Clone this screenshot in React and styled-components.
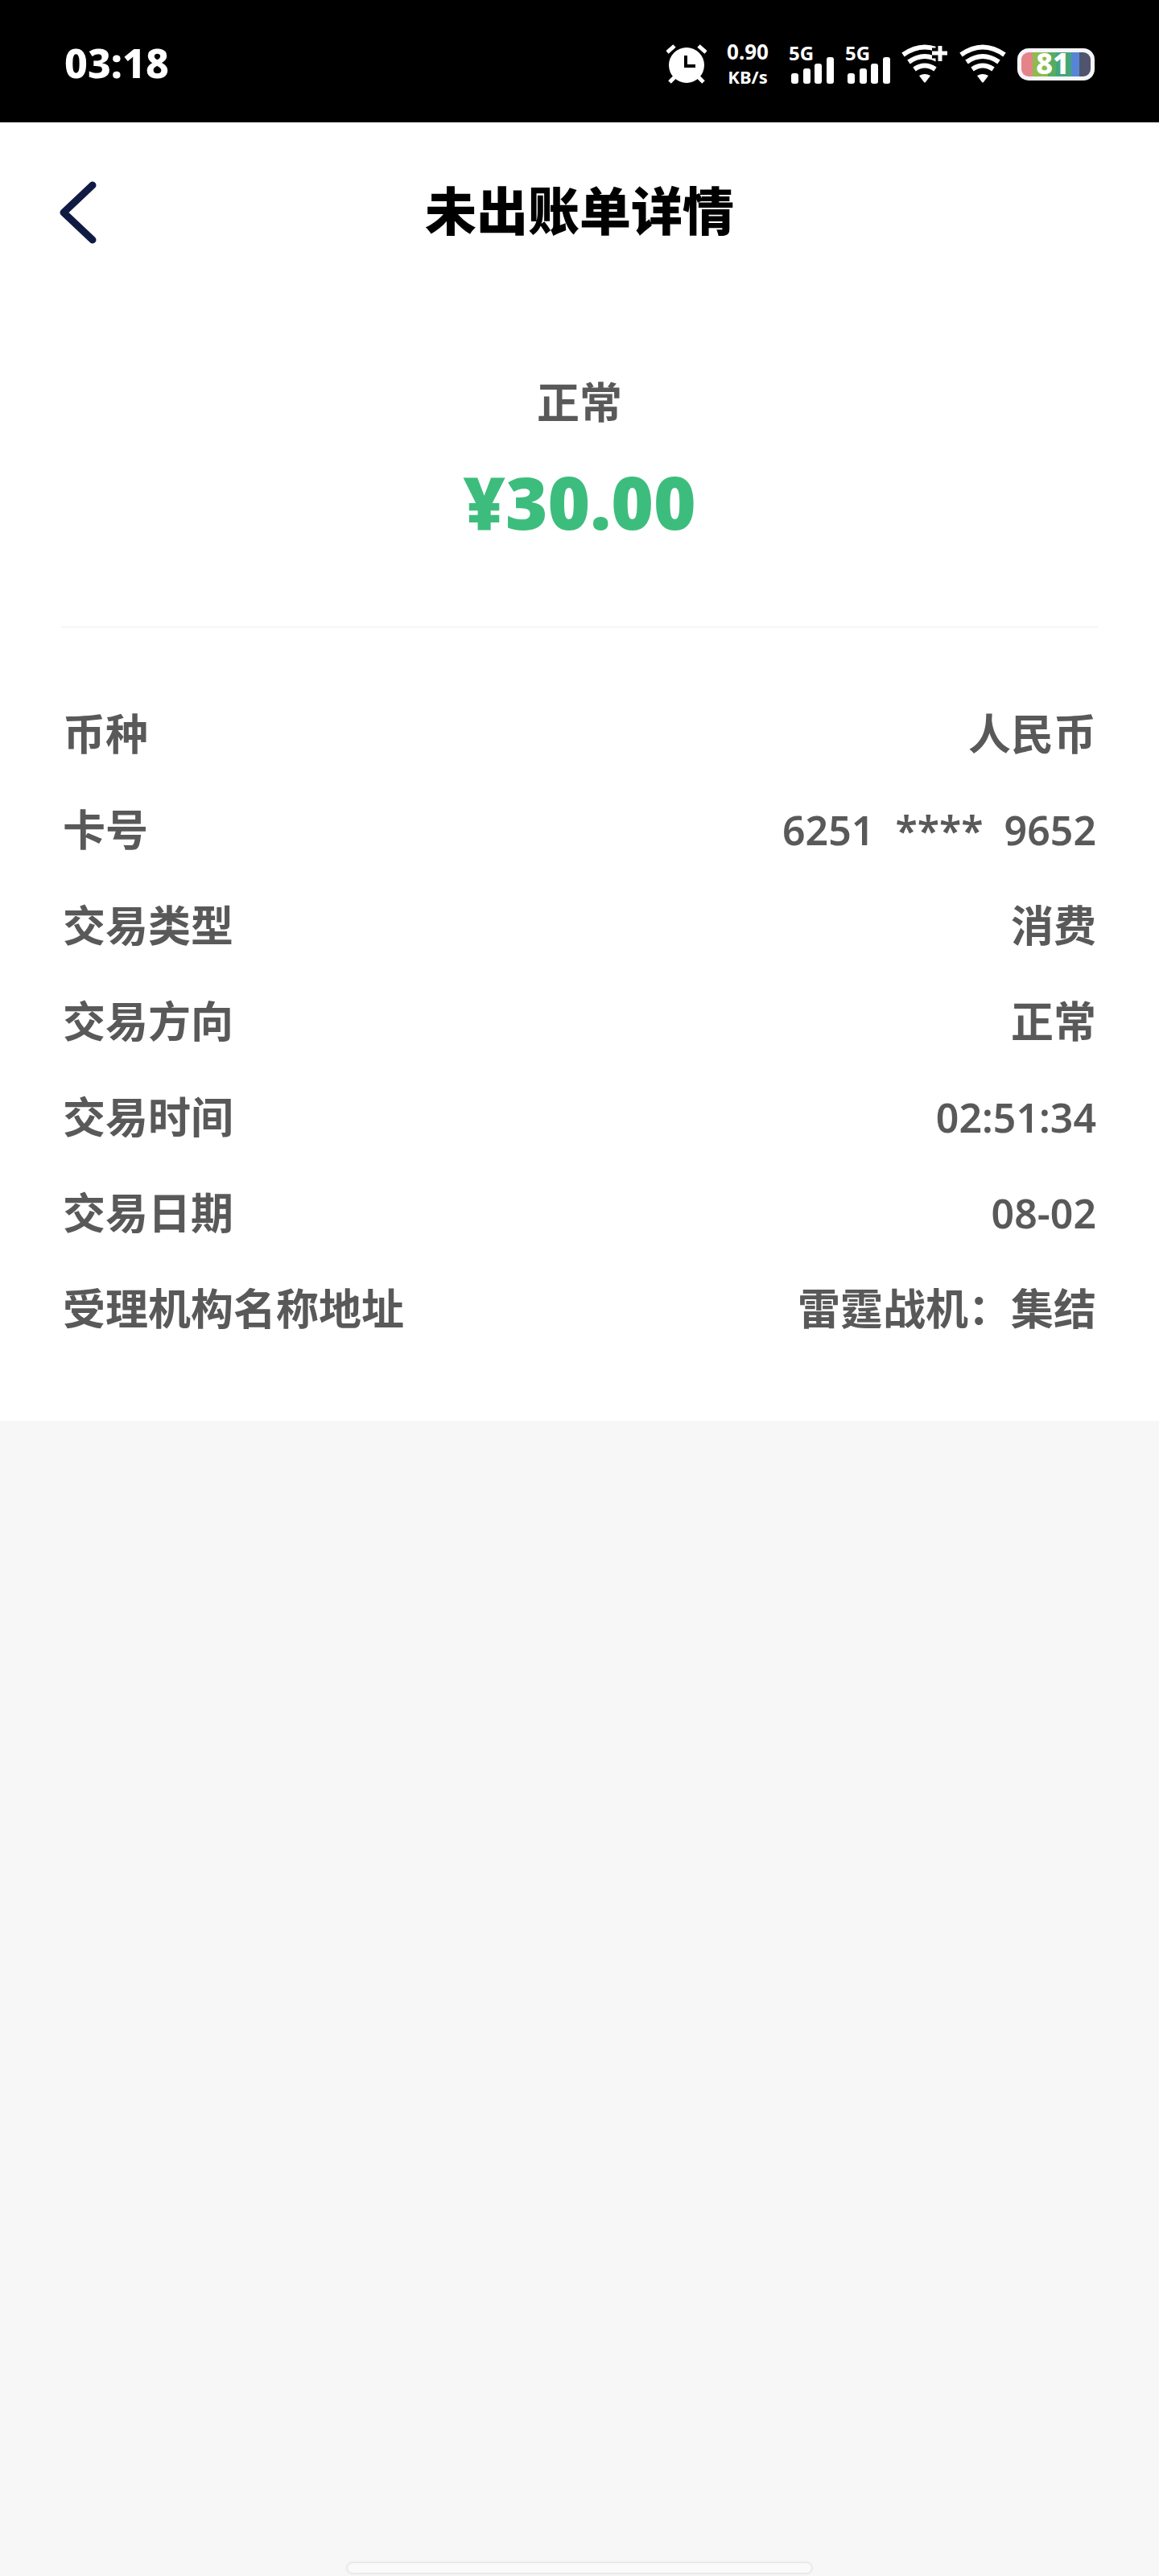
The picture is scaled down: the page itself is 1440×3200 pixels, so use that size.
import React from 'react'
import styled, {createGlobalStyle} from 'styled-components'

const details = [
    {label: '币种', value: '人民币'},
    {label: '卡号', value: '6251  ****  9652', numeric: true},
    {label: '交易类型', value: '消费'},
    {label: '交易方向', value: '正常'},
    {label: '交易时间', value: '02:51:34', numeric: true},
    {label: '交易日期', value: '08-02', numeric: true},
    {label: '受理机构名称地址', value: '雷霆战机：集结'},
]

function AlarmIcon() {
    return (
        <svg width="50" height="50" viewBox="0 0 50 50" fill="none" stroke="#fff" strokeWidth="5">
            <circle cx="25" cy="26" r="22" fill="#fff" stroke="none" />
            <path d="M1 10 L10 2 M40 2 L49 10" />
            <path d="M11 40 L4 47 M39 40 L46 47" />
            <path d="M24 14 V27 H36" stroke="#000" strokeWidth="4" />
        </svg>
    )
}

function SignalIcon() {
    return (
        <svg width="56" height="66" viewBox="0 -8 56 66" fill="#fff">
            <text x="0" y="20" fontSize="24" fontWeight="700">5G</text>
            <rect x="3" y="36" width="9" height="13" rx="3" />
            <rect x="18" y="30" width="9" height="19" rx="3" />
            <rect x="32" y="24" width="9" height="25" rx="3" />
            <rect x="47" y="16" width="9" height="33" rx="3" />
        </svg>
    )
}

function WifiIcon({plus}) {
    return (
        <svg width="58" height="50" viewBox="0 0 58 50" fill="none" stroke="#fff" strokeWidth="6">
            <path d="M2 13 Q29 -6 56 13" />
            <path d="M9 22 Q29 8 49 22" />
            <path d="M16 31 Q29 22 42 31" />
            <path d="M22 39 Q29 35 36 39 L30 47 Q29 48 28 47 Z" fill="#fff" stroke="none" />
            {plus && <path d="M49 0 V24 M38 11 H58" stroke="#000" strokeWidth="13" />}
            {plus && <path d="M48 2 V21 M38 11 H57" strokeWidth="5" />}
        </svg>
    )
}

function BackIcon() {
    return (
        <svg width="46" height="82" viewBox="0 0 46 82" fill="none" stroke="#101b44"
            strokeWidth="9" strokeLinecap="round" strokeLinejoin="round">
            <path d="M41 9 L5 43 L41 77" />
        </svg>
    )
}

function StatusBar() {
    return (
        <Status>
            <Clock>03:18</Clock>
            <StatusIcons>
                <AlarmIcon />
                <Speed>
                    <SpeedValue>0.90</SpeedValue>
                    <SpeedUnit>KB/s</SpeedUnit>
                </Speed>
                <Radios>
                    <SignalIcon />
                    <SignalIcon />
                    <WifiIcon plus />
                    <WifiIcon />
                    <Battery>81</Battery>
                </Radios>
            </StatusIcons>
        </Status>
    )
}

export default function App() {
    return (
        <Page>
            <GlobalStyle />
            <StatusBar />
            <Card>
                <Header>
                    <BackButton type="button" aria-label="返回"><BackIcon /></BackButton>
                    <Title>未出账单详情</Title>
                </Header>
                <Summary>
                    <State>正常</State>
                    <Amount>¥30.00</Amount>
                </Summary>
                <Details>
                    {details.map(item => (
                        <Row key={item.label}>
                            <Label>{item.label}</Label>
                            <Value $numeric={item.numeric}>{item.value}</Value>
                        </Row>
                    ))}
                </Details>
            </Card>
            <HomeBar />
        </Page>
    )
}

const GlobalStyle = createGlobalStyle`
    body {
        margin: 0;
        background: #f7f7f7;
        color: #595959;
        font-family: "Noto Sans", "Noto Sans CJK SC", sans-serif;
    }
`

const Page = styled.div`
    display: flex;
    flex-direction: column;
    min-height: 100vh;
`

const Status = styled.div`
    display: flex;
    align-items: center;
    justify-content: space-between;
    height: 152px;
    padding: 4px 80px 0;
    box-sizing: border-box;
    background: #000;
    color: #fff;
`

const Clock = styled.time`
    font-size: 50px;
    line-height: 64px;
    font-weight: 800;
`

const StatusIcons = styled.div`
    display: flex;
    align-items: center;
    gap: 25px;
    padding-top: 4px;
`

const Speed = styled.div`
    display: flex;
    flex-direction: column;
    align-items: center;
    line-height: 31px;
    font-weight: 700;
`

const SpeedValue = styled.span`
    font-size: 26px;
`

const SpeedUnit = styled.span`
    font-size: 22px;
`

const Radios = styled.div`
    display: flex;
    align-items: center;
    gap: 14px;
`

const Battery = styled.div`
    display: flex;
    align-items: center;
    justify-content: center;
    width: 96px;
    height: 40px;
    padding: 0 8px 2px 0;
    box-sizing: border-box;
    border: 5px solid #f5f5fa;
    border-radius: 14px;
    background: linear-gradient(
        90deg,
        #e58488 0 16%,
        #8fbb4b 16% 38%,
        #55ad62 38% 50%,
        #43a678 50% 72%,
        #5685d6 72% 84%,
        #50546f 84%
    );
    font-size: 36px;
    line-height: 30px;
    font-weight: 800;
`

const Card = styled.main`
    background: #fff;
`

const Header = styled.header`
    display: grid;
    grid-template-columns: 1fr auto 1fr;
    align-items: center;
    height: 220px;
    padding: 0 74px;
`

const BackButton = styled.button`
    display: flex;
    justify-self: start;
    padding: 0;
    border: 0;
    background: none;
    cursor: pointer;
`

const Title = styled.h1`
    margin: 0;
    color: #000;
    font-size: 64px;
    line-height: 80px;
    font-weight: 900;
`

const Summary = styled.section`
    display: flex;
    flex-direction: column;
    align-items: center;
    margin: 0 76px;
    padding: 88px 0 84px;
    border-bottom: 2px solid #f6f6f6;
`

const State = styled.p`
    margin: 0;
    font-size: 53px;
    line-height: 80px;
    font-weight: 700;
`

const Amount = styled.p`
    margin: 0;
    padding: 24px 0 12px;
    color: #3dbd7d;
    font-size: 90px;
    line-height: 118px;
    font-weight: 900;
`

const Details = styled.dl`
    margin: 0;
    padding: 72px 78px 80px;
`

const Row = styled.div`
    display: flex;
    align-items: center;
    justify-content: space-between;
    height: 119px;
`

const Label = styled.dt`
    font-size: 53px;
    line-height: 80px;
    font-weight: 700;
`

const Value = styled.dd`
    margin: 0;
    font-size: ${props => props.$numeric ? '50px' : '53px'};
    line-height: 80px;
    font-weight: ${props => props.$numeric ? 600 : 700};
    white-space: pre;
`

const HomeBar = styled.div`
    width: 40%;
    height: 12px;
    margin: auto auto 4px;
    border-radius: 6px;
    background: #fafafa;
    box-shadow: 0 0 3px 1px #dcdcdc;
`
